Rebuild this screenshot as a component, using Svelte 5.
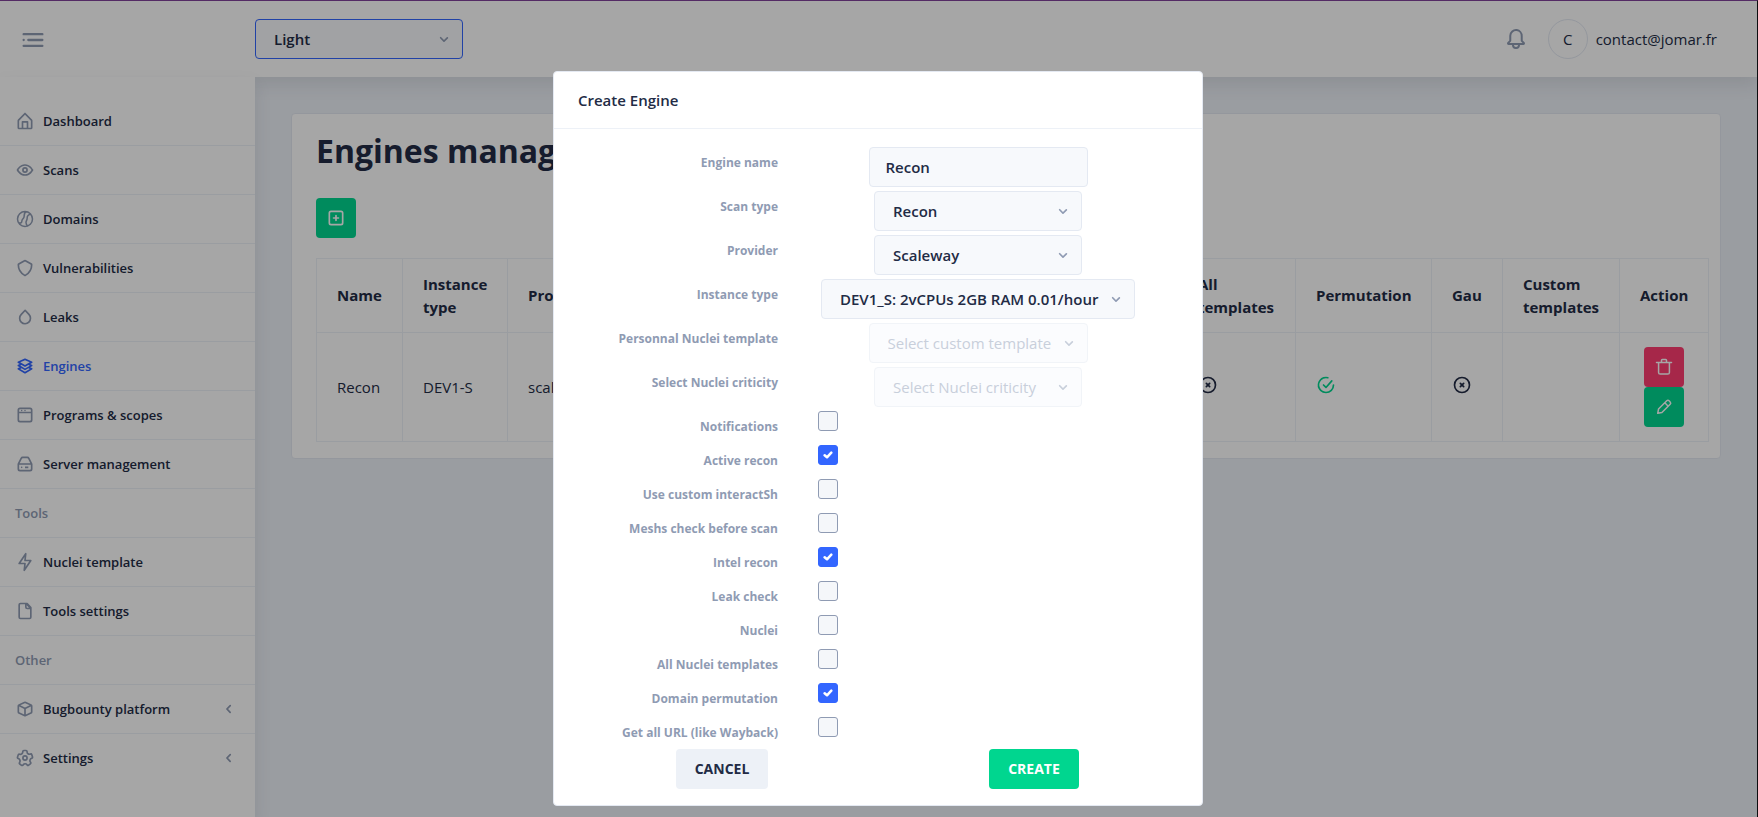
<script>
  const icons = {
    home: ['M20.42 10.18L12.71 2.3a1 1 0 0 0-1.42 0l-7.71 7.89A2 2 0 0 0 3 11.62V20a2 2 0 0 0 1.89 2h14.22A2 2 0 0 0 21 20v-8.38a2.07 2.07 0 0 0-.58-1.44zM10 20v-6h4v6zm9 0h-3v-7a1 1 0 0 0-1-1H9a1 1 0 0 0-1 1v7H5v-8.42l7-7.15 7 7.19z'],
    eye: [
      'M21.87 11.5c-.64-1.11-4.16-6.68-10.14-6.5-5.53.14-8.73 5-9.6 6.5a1 1 0 0 0 0 1c.63 1.09 4 6.5 9.89 6.5h.25c5.53-.14 8.74-5 9.6-6.5a1 1 0 0 0 0-1zM12.22 17c-4.31.1-7.12-3.59-8-5 1-1.61 3.61-4.9 7.61-5 4.29-.11 7.11 3.59 8 5-1.03 1.61-3.61 4.9-7.61 5z',
      'M12 8.5a3.5 3.5 0 1 0 3.5 3.5A3.5 3.5 0 0 0 12 8.5zm0 5a1.5 1.5 0 1 1 1.5-1.5 1.5 1.5 0 0 1-1.5 1.5z'
    ],
    shield: ['M12 21.85a2 2 0 0 1-1-.25l-.3-.17A15.17 15.17 0 0 1 3 8.23v-.14a2 2 0 0 1 1-1.75l7-3.94a2 2 0 0 1 2 0l7 3.94a2 2 0 0 1 1 1.75v.14a15.17 15.17 0 0 1-7.72 13.2l-.3.17a2 2 0 0 1-.98.25zm0-17.7L5 8.09v.14a13.15 13.15 0 0 0 6.7 11.45l.3.17.3-.17A13.15 13.15 0 0 0 19 8.23v-.14z'],
    droplet: ['M12 21.1a7.4 7.4 0 0 1-5.28-2.28 7.73 7.73 0 0 1 .1-10.77l4.64-4.65a.94.94 0 0 1 .71-.3 1 1 0 0 1 .71.31l4.56 4.72a7.73 7.73 0 0 1-.09 10.77A7.33 7.33 0 0 1 12 21.1zm.13-15.57L8.24 9.45a5.74 5.74 0 0 0-.07 8A5.43 5.43 0 0 0 12 19.1a5.42 5.42 0 0 0 3.9-1.61 5.72 5.72 0 0 0 .06-8z'],
    layers: ['M21 11.35a1 1 0 0 0-.61-.86l-2.15-.92 2.26-1.3a1 1 0 0 0 .5-.92 1 1 0 0 0-.61-.86l-8-3.41a1 1 0 0 0-.78 0l-8 3.41a1 1 0 0 0-.61.86 1 1 0 0 0 .5.92l2.26 1.3-2.15.92a1 1 0 0 0-.61.86 1 1 0 0 0 .5.92l2.26 1.3-2.15.92a1 1 0 0 0-.61.86 1 1 0 0 0 .5.92l8 4.6a1 1 0 0 0 1 0l8-4.6a1 1 0 0 0 .5-.92 1 1 0 0 0-.61-.86l-2.15-.92 2.26-1.3a1 1 0 0 0 .5-.92zm-9-6.26l5.76 2.45L12 10.85 6.24 7.54zm-.5 7.78a1 1 0 0 0 1 0l3.57-2 1.69.72L12 14.85l-5.76-3.31 1.69-.72zm6.26 2.67L12 18.85l-5.76-3.31 1.69-.72 3.57 2.05a1 1 0 0 0 1 0l3.57-2.05z'],
    browser: [
      'M18 3H6a3 3 0 0 0-3 3v12a3 3 0 0 0 3 3h12a3 3 0 0 0 3-3V6a3 3 0 0 0-3-3zm1 15a1 1 0 0 1-1 1H6a1 1 0 0 1-1-1v-8h14zM5 8V6a1 1 0 0 1 1-1h12a1 1 0 0 1 1 1v2z',
      'M8 5.6a.9.9 0 1 0 0 1.8.9.9 0 0 0 0-1.8zM12 5.6a.9.9 0 1 0 0 1.8.9.9 0 0 0 0-1.8z'
    ],
    drive: [
      'M20.79 11.34l-3.34-6.68A3 3 0 0 0 14.76 3H9.24a3 3 0 0 0-2.69 1.66l-3.34 6.68a2 2 0 0 0-.21.9V18a3 3 0 0 0 3 3h12a3 3 0 0 0 3-3v-5.76a2 2 0 0 0-.21-.9zM8.34 5.55a1 1 0 0 1 .9-.55h5.52a1 1 0 0 1 .9.55L18.38 11H5.62zM18 19H6a1 1 0 0 1-1-1v-5h14v5a1 1 0 0 1-1 1z',
      'M12 15h4v2h-4zM8 15a1 1 0 1 0 0 2 1 1 0 0 0 0-2z'
    ],
    flash: ['M11.11 23a1 1 0 0 1-.34-.06 1 1 0 0 1-.65-1.05l.77-7.09H5a1 1 0 0 1-.83-1.56l7.89-11.8a1 1 0 0 1 1.17-.38 1 1 0 0 1 .65 1l-.77 7.14H19a1 1 0 0 1 .83.56 1 1 0 0 1 0 1l-7.89 11.8a1 1 0 0 1-.83.44zM6.87 12.8H12a1 1 0 0 1 .74.33 1 1 0 0 1 .25.78l-.45 4.15 4.59-6.86H12a1 1 0 0 1-1-1.11l.45-4.15z'],
    file: ['M19.74 7.33l-4.44-5a1 1 0 0 0-.74-.33h-8A2.53 2.53 0 0 0 4 4.5v15A2.53 2.53 0 0 0 6.56 22h10.88A2.53 2.53 0 0 0 20 19.5V8a1 1 0 0 0-.26-.67zM14 5l2.74 3h-2a.79.79 0 0 1-.74-.85zm3.44 15H6.56a.53.53 0 0 1-.56-.5v-15a.53.53 0 0 1 .56-.5H12v3.15A2.79 2.79 0 0 0 14.71 10H18v9.5a.53.53 0 0 1-.56.5z'],
    cube: ['M20.66 7.26c0-.07-.1-.14-.15-.21l-.09-.1a2.5 2.5 0 0 0-.86-.68l-6.4-3a2.7 2.7 0 0 0-2.26 0l-6.4 3a2.6 2.6 0 0 0-.86.68L3.52 7a1 1 0 0 0-.15.2A2.39 2.39 0 0 0 3 8.46v7.06a2.49 2.49 0 0 0 1.46 2.26l6.4 3a2.7 2.7 0 0 0 2.27 0l6.4-3A2.49 2.49 0 0 0 21 15.54V8.46a2.39 2.39 0 0 0-.34-1.2zm-8.95-2.2a.73.73 0 0 1 .58 0l5.33 2.48L12 10.15 6.38 7.54zM5.3 16a.47.47 0 0 1-.3-.43V9.1l6 2.79v6.72zm13.39 0L13 18.61v-6.72l6-2.79v6.44a.48.48 0 0 1-.31.46z'],
    settings: [
      'M8.61 22a2.25 2.25 0 0 1-1.35-.46L5.19 20a2.37 2.37 0 0 1-.49-3.22 2.06 2.06 0 0 0 .23-1.86l-.06-.16a1.83 1.83 0 0 0-1.12-1.22h-.16a2.34 2.34 0 0 1-1.48-2.94L2.93 8a2.18 2.18 0 0 1 1.12-1.41 2.14 2.14 0 0 1 1.68-.12 1.93 1.93 0 0 0 1.78-.29l.13-.1a1.94 1.94 0 0 0 .73-1.51v-.24A2.32 2.32 0 0 1 10.66 2h2.55a2.26 2.26 0 0 1 1.6.67 2.37 2.37 0 0 1 .68 1.68v.28a1.76 1.76 0 0 0 .69 1.43l.11.08a1.74 1.74 0 0 0 1.59.26l.34-.11A2.26 2.26 0 0 1 21.1 7.8l.79 2.52a2.36 2.36 0 0 1-1.46 2.93l-.2.07A1.89 1.89 0 0 0 19 14.6a2 2 0 0 0 .25 1.65l.26.38a2.38 2.38 0 0 1-.5 3.23L17 21.41a2.24 2.24 0 0 1-3.22-.53l-.12-.17a1.75 1.75 0 0 0-1.5-.78 1.8 1.8 0 0 0-1.43.77l-.23.33A2.25 2.25 0 0 1 9 22a2 2 0 0 1-.39 0zM4.4 11.62a3.83 3.83 0 0 1 2.38 2.5v.12a4 4 0 0 1-.46 3.62.38.38 0 0 0 0 .51L8.47 20a.25.25 0 0 0 .37-.07l.23-.33a3.77 3.77 0 0 1 6.2 0l.12.18a.3.3 0 0 0 .18.12.25.25 0 0 0 .19-.05l2.06-1.56a.36.36 0 0 0 .07-.49l-.26-.38A4 4 0 0 1 17.1 14a3.92 3.92 0 0 1 2.49-2.61l.2-.07a.34.34 0 0 0 .19-.44l-.78-2.49a.35.35 0 0 0-.2-.19.21.21 0 0 0-.19 0l-.34.11a3.74 3.74 0 0 1-3.43-.57L15 7.65a3.76 3.76 0 0 1-1.49-3v-.31a.37.37 0 0 0-.1-.26.31.31 0 0 0-.21-.08h-2.54a.31.31 0 0 0-.29.33v.25a3.9 3.9 0 0 1-1.52 3.09l-.13.1a3.91 3.91 0 0 1-3.63.59.22.22 0 0 0-.14 0 .28.28 0 0 0-.12.15L4 11.12a.36.36 0 0 0 .22.45z',
      'M12 15.5a3.5 3.5 0 1 1 3.5-3.5 3.5 3.5 0 0 1-3.5 3.5zm0-5a1.5 1.5 0 1 0 1.5 1.5 1.5 1.5 0 0 0-1.5-1.5z'
    ],
    left: ['M13.36 17a1 1 0 0 1-.72-.31l-3.86-4a1 1 0 0 1 0-1.4l4-4a1 1 0 1 1 1.42 1.42L10.9 12l3.18 3.3a1 1 0 0 1 0 1.41 1 1 0 0 1-.72.29z'],
    down: ['M12 15.5a1 1 0 0 1-.71-.29l-4-4a1 1 0 1 1 1.42-1.42L12 13.1l3.3-3.18a1 1 0 1 1 1.38 1.44l-4 3.86a1 1 0 0 1-.68.28z'],
    bell: ['M20.52 15.21l-1.8-1.81V8.94a6.86 6.86 0 0 0-5.82-6.88 6.74 6.74 0 0 0-7.62 6.67v4.67l-1.8 1.81A1.64 1.64 0 0 0 4.64 18H8v.34A3.84 3.84 0 0 0 12 22a3.84 3.84 0 0 0 4-3.66V18h3.36a1.64 1.64 0 0 0 1.16-2.79zM14 18.34A1.88 1.88 0 0 1 12 20a1.88 1.88 0 0 1-2-1.66V18h4zM5.51 16l1.18-1.18a2 2 0 0 0 .59-1.42V8.73A4.73 4.73 0 0 1 8.9 5.17 4.67 4.67 0 0 1 12.64 4a4.86 4.86 0 0 1 4.08 4.9v4.5a2 2 0 0 0 .58 1.42L18.49 16z'],
    menu: ['M4 11a1 1 0 1 0 0 2 1 1 0 0 0 0-2zM8 11h12a1 1 0 0 1 0 2H8a1 1 0 0 1 0-2zM4 16h16a1 1 0 0 1 0 2H4a1 1 0 0 1 0-2zM4 6h16a1 1 0 0 1 0 2H4a1 1 0 0 1 0-2z'],
    plus: [
      'M18 3H6a3 3 0 0 0-3 3v12a3 3 0 0 0 3 3h12a3 3 0 0 0 3-3V6a3 3 0 0 0-3-3zm1 15a1 1 0 0 1-1 1H6a1 1 0 0 1-1-1V6a1 1 0 0 1 1-1h12a1 1 0 0 1 1 1z',
      'M15 11h-2V9a1 1 0 0 0-2 0v2H9a1 1 0 0 0 0 2h2v2a1 1 0 0 0 2 0v-2h2a1 1 0 0 0 0-2z'
    ],
    no: [
      'M12 2a10 10 0 1 0 10 10A10 10 0 0 0 12 2zm0 18a8 8 0 1 1 8-8 8 8 0 0 1-8 8z',
      'M14.71 9.29a1 1 0 0 0-1.42 0L12 10.59l-1.29-1.3a1 1 0 0 0-1.42 1.42l1.3 1.29-1.3 1.29a1 1 0 0 0 0 1.42 1 1 0 0 0 1.42 0l1.29-1.3 1.29 1.3a1 1 0 0 0 1.42 0 1 1 0 0 0 0-1.42L13.41 12l1.3-1.29a1 1 0 0 0 0-1.42z'
    ],
    yes: [
      'M9.71 11.29a1 1 0 0 0-1.42 1.42l3 3A1 1 0 0 0 12 16a1 1 0 0 0 .72-.34l7-8a1 1 0 0 0-1.5-1.32L12 13.54z',
      'M21 11a1 1 0 0 0-1 1 8 8 0 0 1-8 8A8 8 0 0 1 6.33 6.36 7.93 7.93 0 0 1 12 4a8.79 8.79 0 0 1 1.9.22 1 1 0 1 0 .47-1.94A10.54 10.54 0 0 0 12 2a10 10 0 0 0-7 17.09A9.93 9.93 0 0 0 12 22a10 10 0 0 0 10-10 1 1 0 0 0-1-1z'
    ]
  };

  // Icons drawn as lines rather than filled shapes
  const lines = {
    globe: 'M12 3a9 9 0 1 0 0 18 9 9 0 0 0 0-18zM13.500 3.300C10.500 4.400 11.300 7.500 10.800 9.800 10.400 11.800 8.200 12 8.200 14.600c0 2.400-2.600 3-4.300 1.200M19 6.400C16 6.600 14.400 8.600 14.600 11c.2 2.200-1.400 2.800-1.400 5.200 0 2 .8 3.400 2.200 4.200',
    trash: 'M3 6.500h18M5.500 6.500v12a2 2 0 0 0 2 2h9a2 2 0 0 0 2-2v-12M9 6.500V4a1 1 0 0 1 1-1h4a1 1 0 0 1 1 1v2.500',
    pencil: 'M4.500 19.500l.9-5L15.300 4.600a2 2 0 0 1 2.800 0l1.300 1.300a2 2 0 0 1 0 2.800L9.500 18.600zM13 7l4 4'
  };

  const menu = [
    { icon: 'home', label: 'Dashboard' },
    { icon: 'eye', label: 'Scans' },
    { icon: 'globe', label: 'Domains' },
    { icon: 'shield', label: 'Vulnerabilities' },
    { icon: 'droplet', label: 'Leaks' },
    { icon: 'layers', label: 'Engines', active: true },
    { icon: 'browser', label: 'Programs & scopes' },
    { icon: 'drive', label: 'Server management' },
    { group: 'Tools' },
    { icon: 'flash', label: 'Nuclei template' },
    { icon: 'file', label: 'Tools settings' },
    { group: 'Other' },
    { icon: 'cube', label: 'Bugbounty platform', expandable: true },
    { icon: 'settings', label: 'Settings', expandable: true }
  ];

  const columns = [
    { title: 'Name', width: 86, text: 'Recon' },
    { title: 'Instance type', width: 105, text: 'DEV1-S' },
    { title: 'Provider', width: 105, text: 'scaleway' },
    { title: 'Recon', width: 160, on: true },
    { title: 'Intel recon', on: true },
    { title: 'Leak check', on: false },
    { title: 'Nuclei', on: false },
    { title: 'All templates', width: 118, on: false },
    { title: 'Permutation', width: 136, on: true },
    { title: 'Gau', width: 71, on: false },
    { title: 'Custom templates', width: 117, text: '' }
  ];

  const selects = [
    { id: 'scan-type', label: 'Scan type', value: 'Recon' },
    { id: 'provider', label: 'Provider', value: 'Scaleway' },
    { id: 'instance-type', label: 'Instance type', value: 'DEV1_S: 2vCPUs 2GB RAM 0.01/hour' },
    { id: 'custom-template', label: 'Personnal Nuclei template', value: 'Select custom template', disabled: true },
    { id: 'criticity', label: 'Select Nuclei criticity', value: 'Select Nuclei criticity', disabled: true }
  ];

  let engineName = $state('Recon');
  let options = $state([
    { id: 'notifications', label: 'Notifications', checked: false },
    { id: 'active-recon', label: 'Active recon', checked: true },
    { id: 'interactsh', label: 'Use custom interactSh', checked: false },
    { id: 'meshs', label: 'Meshs check before scan', checked: false },
    { id: 'intel', label: 'Intel recon', checked: true },
    { id: 'leak', label: 'Leak check', checked: false },
    { id: 'nuclei', label: 'Nuclei', checked: false },
    { id: 'all-nuclei', label: 'All Nuclei templates', checked: false },
    { id: 'permutation', label: 'Domain permutation', checked: true },
    { id: 'gau', label: 'Get all URL (like Wayback)', checked: false }
  ]);
</script>

{#snippet icon(name, size = 20)}
  <svg class="icon" width={size} height={size} viewBox="0 0 24 24" aria-hidden="true">
    {#if lines[name]}
      <path class="line" d={lines[name]} />
    {:else}
      {#each icons[name] as d}<path {d} fill-rule="evenodd" />{/each}
    {/if}
  </svg>
{/snippet}

<div class="app">
  <header class="topbar">
    <div class="brand">
      <button class="plain" aria-label="Toggle menu">{@render icon('menu', 28)}</button>
    </div>
    <span class="select focused">
      <select aria-label="Theme"><option>Light</option></select>
      {@render icon('down')}
    </span>
    <div class="account">
      <button class="plain" aria-label="Notifications">{@render icon('bell', 24)}</button>
      <span class="avatar">C</span>
      <span class="email">contact@jomar.fr</span>
    </div>
  </header>

  <div class="columns">
    <nav class="sidebar">
      <ul>
        {#each menu as item}
          <li>
            {#if item.group}
              <span class="group">{item.group}</span>
            {:else}
              <a href="#top" class:active={item.active}>
                {@render icon(item.icon)}
                <span class="title">{item.label}</span>
                {#if item.expandable}{@render icon('left')}{/if}
              </a>
            {/if}
          </li>
        {/each}
      </ul>
    </nav>

    <main>
      <section class="card">
        <h1>Engines management</h1>
        <button class="square success add" aria-label="Add engine">{@render icon('plus')}</button>
        <table>
          <colgroup>
            {#each columns as column}
              <col style:width={column.width ? `${column.width}px` : null} />
            {/each}
            <col class="action-col" />
          </colgroup>
          <thead>
            <tr>
              {#each columns as column}<th>{column.title}</th>{/each}
              <th>Action</th>
            </tr>
          </thead>
          <tbody>
            <tr>
              {#each columns as column}
                <td>
                  {#if column.text !== undefined}
                    {column.text}
                  {:else}
                    <span class="status" class:on={column.on}>{@render icon(column.on ? 'yes' : 'no')}</span>
                  {/if}
                </td>
              {/each}
              <td>
                <div class="actions">
                  <button class="square danger" aria-label="Delete">{@render icon('trash')}</button>
                  <button class="square success" aria-label="Edit">{@render icon('pencil')}</button>
                </div>
              </td>
            </tr>
          </tbody>
        </table>
      </section>
    </main>
  </div>

  <div class="backdrop">
    <form class="dialog" role="dialog" aria-labelledby="dialog-title" onsubmit={(e) => e.preventDefault()}>
      <h2 id="dialog-title">Create Engine</h2>
      <div class="body">
        <div class="field">
          <label for="engine-name">Engine name</label>
          <div class="control"><input class="text" id="engine-name" type="text" bind:value={engineName} /></div>
        </div>
        {#each selects as field}
          <div class="field">
            <label for={field.id}>{field.label}</label>
            <div class="control">
              <span class="select" class:disabled={field.disabled}>
                <select id={field.id} disabled={field.disabled}><option>{field.value}</option></select>
                {@render icon('down')}
              </span>
            </div>
          </div>
        {/each}
        <div class="checks">
          {#each options as option}
            <div class="check-row">
              <label for={option.id}>{option.label}</label>
              <span class="checkbox">
                <input id={option.id} type="checkbox" bind:checked={option.checked} />
                {#if option.checked}
                  <svg width="10" height="8" viewBox="0 0 10 8" aria-hidden="true"><path d="M1.600 4.200 4 6.300 8.300 1.700" /></svg>
                {/if}
              </span>
            </div>
          {/each}
        </div>
      </div>
      <footer>
        <button type="button" class="wide cancel">Cancel</button>
        <button type="submit" class="wide success">Create</button>
      </footer>
    </form>
  </div>
</div>

<style>
  :global(body) {
    margin: 0;
  }

  .app {
    --text: #222b45;
    --hint: #8f9bb3;
    --primary: #3366ff;
    --success: #00d68f;
    --danger: #ff3d71;
    --divider: #edf1f7;
    --border: #e4e9f2;
    --shadow: 0 8px 16px 0 rgba(44, 51, 73, 0.1);
    display: flex;
    flex-direction: column;
    box-sizing: border-box;
    min-height: 100vh;
    position: relative;
    border-top: 1px solid #562c66;
    border-right: 1px solid #0c0c0e;
    background: var(--divider);
    color: var(--text);
    font: 400 15px/1.5 'Open Sans', 'Noto Sans', sans-serif;
  }

  .app *,
  .app *::before {
    box-sizing: border-box;
  }

  button,
  input,
  select {
    margin: 0;
    font: inherit;
    color: inherit;
  }

  .icon {
    display: block;
    flex: none;
    fill: currentColor;
  }

  .line {
    fill: none;
    stroke: currentColor;
    stroke-width: 1.8;
    stroke-linecap: round;
    stroke-linejoin: round;
  }

  .plain {
    padding: 0;
    border: 0;
    background: none;
    color: var(--hint);
  }

  .topbar {
    display: flex;
    align-items: center;
    height: 76px;
    padding-right: 40px;
    background: #fff;
    box-shadow: var(--shadow);
    position: relative;
  }

  .brand {
    display: flex;
    width: 255px;
    padding: 2px 0 0 19px;
  }

  .account {
    display: flex;
    align-items: center;
    margin-left: auto;
  }

  .avatar {
    display: grid;
    place-items: center;
    width: 40px;
    height: 40px;
    margin: 0 8px 0 20px;
    border: 1px solid var(--border);
    border-radius: 50%;
  }

  .columns {
    display: flex;
    flex: 1;
  }

  .sidebar {
    flex: none;
    width: 255px;
    padding-top: 20px;
    background: #fff;
    box-shadow: var(--shadow);
    position: relative;
  }

  ul {
    margin: 0;
    padding: 0;
    list-style: none;
  }

  li {
    border-bottom: 1px solid var(--divider);
    font-size: 13px;
    font-weight: 600;
    line-height: 24px;
  }

  li:last-child {
    border-bottom: 0;
  }

  li a,
  .group {
    display: flex;
    align-items: center;
    padding: 12px 16px 12px 15px;
    color: var(--text);
    text-decoration: none;
  }

  li .icon,
  .group {
    color: var(--hint);
  }

  .title {
    flex: 1;
    margin-left: 8px;
  }

  li a.active,
  li a.active .icon {
    color: var(--primary);
  }

  main {
    flex: 1;
    min-width: 0;
    padding: 36px;
  }

  .card {
    padding: 16px 11px 16px 24px;
    border: 1px solid var(--border);
    border-radius: 4px;
    background: #fff;
  }

  h1 {
    margin: 0 0 26px;
    font-size: 32px;
    font-weight: 700;
    line-height: 42px;
  }

  .square {
    display: grid;
    place-items: center;
    width: 40px;
    height: 40px;
    padding: 0;
    border: 0;
    border-radius: 4px;
    color: #fff;
  }

  .success {
    background: var(--success);
    color: #fff;
  }

  .danger {
    background: var(--danger);
  }

  .add {
    margin-bottom: 20px;
  }

  table {
    width: 100%;
    table-layout: fixed;
    border-collapse: collapse;
  }

  .action-col {
    width: 89px;
  }

  th,
  td {
    padding: 14px 20px;
    border: 1px solid var(--divider);
    text-align: left;
    vertical-align: middle;
  }

  th {
    font-weight: 700;
  }

  .status {
    display: block;
    padding-bottom: 4px;
  }

  .status.on {
    color: var(--success);
  }

  .actions {
    display: grid;
    justify-content: center;
  }

  .select {
    display: inline-grid;
    align-items: center;
    height: 40px;
    min-width: 208px;
    border: 1px solid var(--border);
    border-radius: 4px;
    background: #f7f9fc;
    font-weight: 600;
  }

  .select.focused {
    border-color: var(--primary);
  }

  .select > select,
  .select > .icon {
    grid-area: 1 / 1;
  }

  .select > select {
    height: 100%;
    padding: 0 35px 0 18px;
    border: 0;
    outline: 0;
    appearance: none;
    background: none;
    opacity: 1;
  }

  .select > .icon {
    justify-self: end;
    margin-right: 8px;
    color: var(--hint);
    pointer-events: none;
  }

  .select.disabled {
    border-color: #f1f4f8;
    background: #fbfcfe;
    color: #c8cfdb;
    font-weight: 400;
  }

  .select.disabled > .icon {
    color: #c8cfdb;
  }

  .backdrop {
    display: flex;
    align-items: flex-start;
    justify-content: center;
    position: absolute;
    inset: 0;
    padding: 70px 1px 0 0;
    background: rgba(0, 0, 0, 0.35);
  }

  .dialog {
    width: 650px;
    max-width: 100%;
    border: 1px solid var(--border);
    border-radius: 4px;
    background: #fff;
  }

  h2 {
    margin: 0;
    padding: 16px 24px;
    border-bottom: 1px solid var(--divider);
    font-size: 15px;
    font-weight: 600;
    line-height: 24px;
  }

  .body {
    padding: 18px 24px 0;
  }

  .field,
  .check-row {
    display: grid;
    grid-template-columns: 1fr 2fr;
    align-items: start;
  }

  .field {
    margin-bottom: 4px;
  }

  .control {
    display: flex;
    justify-content: center;
  }

  label {
    padding-top: 8px;
    color: var(--hint);
    font-size: 12px;
    font-weight: 700;
    line-height: 16px;
    text-align: right;
  }

  .text {
    width: 219px;
    height: 40px;
    padding: 0 16px;
    border: 1px solid var(--border);
    border-radius: 4px;
    outline: 0;
    background: #f7f9fc;
    font-weight: 600;
  }

  .checks {
    display: grid;
    gap: 2px;
  }

  .check-row {
    height: 32px;
  }

  .checkbox {
    display: grid;
    place-items: center;
    width: 20px;
    height: 20px;
    margin-left: 40px;
  }

  .checkbox > * {
    grid-area: 1 / 1;
  }

  .checkbox input {
    width: 20px;
    height: 20px;
    border: 1px solid var(--hint);
    border-radius: 3px;
    appearance: none;
    background: #f5f7fa;
  }

  .checkbox input:checked {
    border-color: var(--primary);
    background: var(--primary);
  }

  .checkbox svg {
    z-index: 1;
    fill: none;
    stroke: #fff;
    stroke-width: 2.5;
    stroke-linecap: round;
    stroke-linejoin: round;
    pointer-events: none;
  }

  footer {
    display: grid;
    grid-template-columns: 1fr 1fr;
    justify-items: center;
    padding: 0 12px 16px;
  }

  .wide {
    height: 40px;
    padding: 0 19px 2px;
    border: 0;
    border-radius: 4px;
    font-size: 14px;
    font-weight: 700;
    text-transform: uppercase;
  }

  .cancel {
    background: var(--divider);
    color: var(--text);
  }
</style>
